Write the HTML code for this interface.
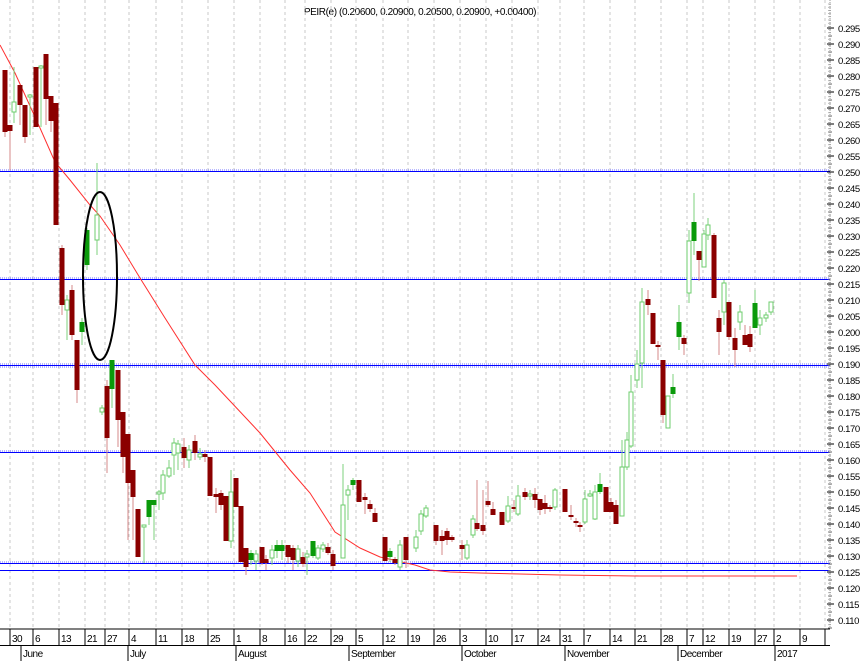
<!DOCTYPE html>
<html><head><meta charset="utf-8"><style>
html,body{margin:0;padding:0;background:#fff;width:861px;height:661px;overflow:hidden}
svg{display:block;font-family:"Liberation Sans",sans-serif}
</style></head><body>
<svg id="s" width="861" height="661" viewBox="0 0 861 661" xmlns="http://www.w3.org/2000/svg">
<text x="420" y="15" font-size="10" text-anchor="middle" fill="#000" letter-spacing="-0.4">PEIR(e) (0.20600, 0.20900, 0.20500, 0.20900, +0.00400)</text>
<g id="grid"></g>
<g id="hl"></g>
<path d="M0,45 L15,73 L40,128 L55,162 L70,180 L90,205 L100,216 L120,245 L140,278 L165,318 L195,365 L215,385 L260,433 L290,470 L310,493 L335,532 L360,548 L380,557 L415,565 L430,570 L450,572 L480,573 L520,574 L560,575 L640,576 L797,576" fill="none" stroke="#ff3030" stroke-width="1"/>
<g id="c"></g>
<ellipse cx="100" cy="276" rx="17" ry="84" fill="none" stroke="#000" stroke-width="2"/>
<g id="ax"></g>
</svg>
<script>
var NS="http://www.w3.org/2000/svg";
function el(p,t,a,txt){var e=document.createElementNS(NS,t);for(var k in a)e.setAttribute(k,a[k]);if(txt!==undefined)e.textContent=txt;document.getElementById(p).appendChild(e);return e;}
var ticks=[[12,"30"],[35,"6"],[61,"13"],[87,"21"],[107,"27"],[131,"4"],[158,"11"],[184,"18"],[210,"25"],[236,"1"],[262,"8"],[287,"16"],[307,"22"],[333,"29"],[358,"5"],[385,"12"],[410,"19"],[436,"26"],[462,"3"],[488,"10"],[514,"17"],[540,"24"],[562,"31"],[586,"7"],[612,"14"],[637,"21"],[663,"28"],[689,"7"],[705,"12"],[731,"19"],[757,"27"],[776,"2"],[802,"9"],[827,"1"]];
ticks.forEach(function(t){
 el("grid","line",{x1:t[0]-2,y1:0,x2:t[0]-2,y2:628,stroke:"#c8c8c8","stroke-dasharray":"3,3","stroke-width":1});
 el("ax","line",{x1:t[0]-2,y1:629,x2:t[0]-2,y2:645,stroke:"#000","stroke-width":1});
 if(t[0]<826) el("ax","text",{x:t[0],y:642,"font-size":"10",fill:"#000","letter-spacing":"-0.5"},t[1]);
});
el("ax","line",{x1:0,y1:629,x2:830,y2:629,stroke:"#000"});
el("ax","line",{x1:0,y1:645.5,x2:830,y2:645.5,stroke:"#000"});
[[21,"June"],[128,"July"],[236,"August"],[349,"September"],[462,"October"],[565,"November"],[678,"December"],[775,"2017"]].forEach(function(m){
 el("ax","line",{x1:m[0],y1:645,x2:m[0],y2:661,stroke:"#000"});
 el("ax","text",{x:m[0]+2,y:657,"font-size":"10",fill:"#000","letter-spacing":"-0.5"},m[1]);
});
el("ax","line",{x1:830,y1:0,x2:830,y2:628,stroke:"#999","stroke-dasharray":"1,1"});
for(var i=0;i<=37;i++){var y=28+i*16;var v=(0.295-i*0.005).toFixed(3);
 el("ax","line",{x1:827,y1:y,x2:834,y2:y,stroke:"#000"});
 el("ax","line",{x1:828,y1:y+8,x2:832,y2:y+8,stroke:"#666"});
 el("ax","text",{x:838,y:y+4,"font-size":"9.5",fill:"#000","letter-spacing":"-0.4"},v);}
for(var y=4;y<628;y+=3.2) el("ax","line",{x1:828,y1:y,x2:831,y2:y,stroke:"#888","stroke-width":0.6});
[171,279,365,452,563].forEach(function(y){
 el("hl","line",{x1:0,y1:y-1,x2:830,y2:y-1,stroke:"#7070ff","stroke-dasharray":"1,1","stroke-width":1});
 el("hl","line",{x1:0,y1:y+0.5,x2:830,y2:y+0.5,stroke:"#0000ff","stroke-width":1});
 if(y==365) el("hl","line",{x1:0,y1:y+2,x2:830,y2:y+2,stroke:"#7070ff","stroke-dasharray":"1,1","stroke-width":1});
});
el("hl","line",{x1:0,y1:570.5,x2:830,y2:570.5,stroke:"#0000ff","stroke-width":1});
var C=[[5,70,70,132,137,"r"],[10,125,125,131,170,"r"],[14,67,102,112,123,"h"],[20,85,85,105,125,"r"],[25,105,105,137,143,"r"],[30,94,95,97,135,"h"],[36,67,67,127,127,"r"],[41,65,66,68,127,"h"],[46,54,54,99,125,"r"],[51,96,96,121,132,"r"],[56,103,103,225,225,"r"],
[62,245,248,305,315,"r"],[67,295,300,310,340,"h"],[72,285,290,335,340,"r"],[77,340,340,390,403,"r"],[82,318,322,332,345,"g"],[87,228,230,265,270,"g"],[97,163,215,240,255,"h"],
[102,405,408,412,415,"h"],[107,380,386,438,473,"r"],[112,360,360,389,408,"g"],[118,370,370,420,447,"r"],[123,412,412,457,473,"r"],[128,434,434,483,540,"r"],[133,470,470,497,540,"r"],[138,509,509,557,557,"r"],[144,525,525,525,563,"h"],[149,500,500,517,525,"g"],[154,500,500,505,540,"g"],[159,490,492,493,510,"h"],[163,470,475,493,500,"h"],[169,460,468,476,478,"h"],[174,438,443,455,475,"h"],[178,440,444,453,470,"h"],[184,438,447,458,468,"r"],[189,445,450,460,468,"h"],[195,435,441,453,460,"r"],[200,448,454,457,460,"h"],[205,450,454,457,462,"r"],[210,457,457,496,496,"r"],[216,488,494,497,513,"r"],[221,490,493,505,510,"r"],[226,496,496,541,541,"r"],[231,470,492,541,548,"h"],[236,478,478,507,507,"r"],[241,506,506,562,562,"r"],[246,548,548,567,575,"r"],[251,550,553,560,565,"g"],[256,550,554,561,570,"h"],
[262,547,547,563,565,"r"],[266,555,559,563,570,"r"],[272,545,550,558,565,"h"],[277,540,545,551,558,"g"],[282,540,545,551,560,"g"],[288,545,545,557,563,"r"],[293,545,548,560,570,"r"],[298,545,549,561,567,"h"],[303,552,557,564,567,"r"],[307,550,554,557,575,"h"],[313,541,541,556,558,"g"],[318,545,548,558,560,"h"],[323,542,545,549,552,"h"],[328,543,547,553,555,"r"],[333,550,554,566,570,"r"],[343,464,505,558,558,"h"],[348,485,490,495,520,"h"],[353,478,480,485,490,"g"],[359,480,480,502,502,"r"],[365,493,497,500,514,"r"],[370,500,504,509,512,"r"],[375,508,513,522,522,"r"],[385,537,537,561,561,"r"],[390,548,551,557,562,"g"],[395,557,559,563,565,"r"],[400,540,545,567,570,"h"],[406,537,537,560,568,"r"],[416,530,537,548,552,"h"],[421,510,514,531,535,"h"],[426,505,508,516,518,"h"],[436,525,525,541,545,"r"],[442,530,536,541,555,"r"],[447,528,531,540,545,"r"],[452,535,537,540,542,"r"],[462,540,545,549,560,"r"],[467,540,545,558,560,"h"],[473,515,519,535,538,"h"],[477,480,523,529,531,"r"],[483,490,525,531,535,"r"],[488,481,501,505,507,"r"],[493,502,509,515,515,"r"],[502,512,512,525,525,"r"],[508,496,506,521,523,"h"],[514,500,507,509,512,"r"],[518,485,496,514,516,"h"],[525,488,492,497,500,"r"],[530,490,494,496,500,"h"],[535,488,494,500,508,"r"],[540,499,499,510,515,"r"],[545,495,503,509,514,"r"],[550,505,507,509,512,"r"],[555,488,490,507,510,"h"],[565,489,489,512,512,"r"],[571,505,515,517,520,"r"],[576,518,521,523,527,"r"],[580,522,525,527,532,"r"],[585,490,499,522,524,"h"],[590,490,494,495,497,"h"],[595,485,492,519,520,"h"],[600,473,484,492,494,"g"],[606,487,487,512,512,"r"],[611,498,502,512,512,"r"],[616,500,505,524,524,"r"],[622,440,467,516,516,"h"],[627,432,440,467,470,"h"],
[631,375,392,446,448,"h"],[637,350,364,380,388,"h"],[642,288,302,363,388,"h"],[648,290,299,305,315,"r"],[653,313,313,344,344,"r"],[658,341,345,347,360,"r"],[663,360,360,415,423,"r"],[668,396,396,428,428,"h"],[673,374,387,394,398,"g"],[679,305,322,337,350,"g"],[684,335,338,344,355,"r"],[689,230,241,293,303,"h"],[694,193,222,241,255,"g"],[699,251,251,260,281,"r"],[704,230,234,267,267,"h"],[708,218,225,235,240,"h"],[714,233,235,298,298,"r"],[719,310,318,332,355,"r"],[724,280,283,312,325,"h"],[729,302,302,337,340,"r"],[735,328,338,350,367,"r"],[740,305,312,322,330,"h"],[745,325,335,345,345,"r"],[750,326,334,347,352,"r"],[755,290,303,328,328,"g"],[760,310,318,325,335,"h"],[766,312,315,318,322,"h"],[771,302,302,312,315,"h"]];
C.forEach(function(c){
 var x=c[0],t=c[5];
 var wc=t=="r"?"#d48a8a":"#7ed07e";
 el("c","line",{x1:x,y1:c[1],x2:x,y2:c[4],stroke:wc,"stroke-width":1});
 var h=Math.max(c[3]-c[2],2);
 if(t=="r") el("c","rect",{x:x-2.5,y:c[2],width:5,height:h,fill:"#8b0000"});
 else if(t=="g") el("c","rect",{x:x-2.5,y:c[2],width:5,height:h,fill:"#0a9a0a"});
 else el("c","rect",{x:x-2,y:c[2],width:4,height:h,fill:"#fff",stroke:"#6ccc6c","stroke-width":1});
});
</script>
</body></html>
